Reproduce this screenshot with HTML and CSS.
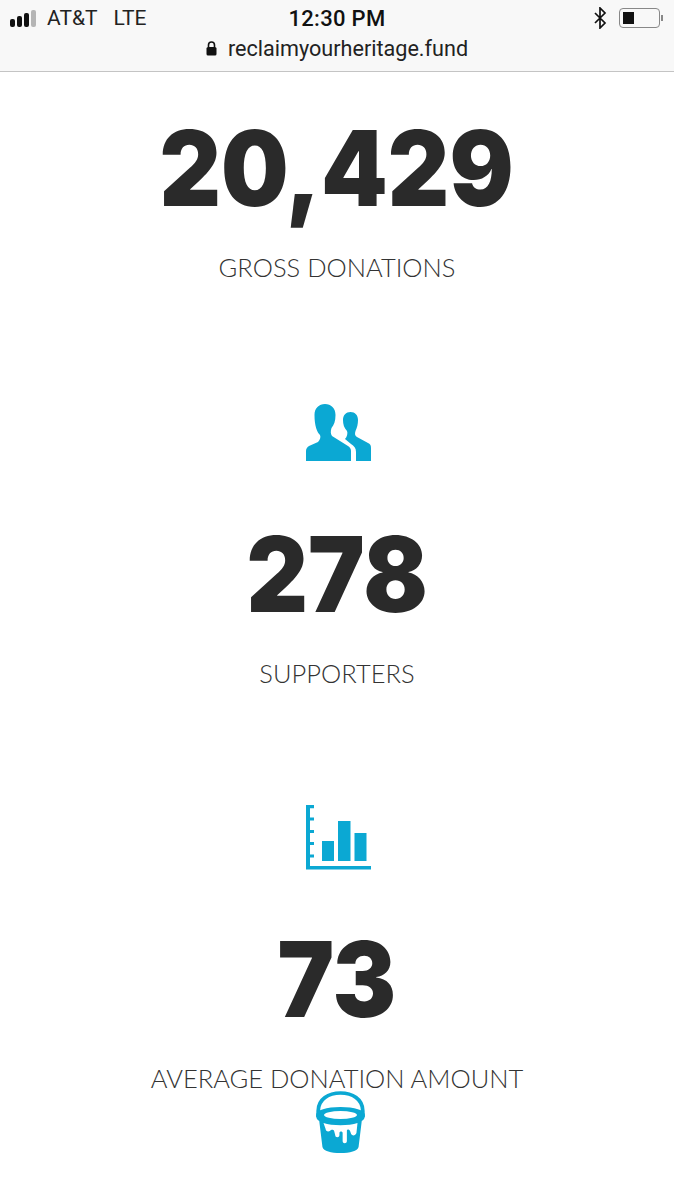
FILE: index.html
```html
<!DOCTYPE html>
<html lang="en">
<head>
    <meta charset="UTF-8">
    <meta name="viewport" content="width=device-width, initial-scale=1.0">
    <title>reclaimyourheritage.fund</title>
    <link rel="stylesheet" href="styles.css">
</head>
<body>

<header class="phone-bar">
    <div class="status-row">
        <div class="status-left">
            <span class="signal"><i></i><i></i><i></i><i class="off"></i></span>
            <span>AT&amp;T</span>
            <span class="network">LTE</span>
        </div>
        <div class="clock">12:30 PM</div>
        <div class="status-right">
            <svg class="bluetooth" width="14" height="22" viewBox="0 0 14 22">
                <path d="M2 6l10 10-5 5V1l5 5L2 16" fill="none" stroke="#111" stroke-width="1.7"/>
            </svg>
            <span class="battery"><span class="charge"></span></span>
            <span class="battery-tip"></span>
        </div>
    </div>
    <div class="url-row">
        <svg width="11" height="15" viewBox="0 0 11 15">
            <path d="M2.5 6V4a3 3 0 0 1 6 0v2" fill="none" stroke="#111" stroke-width="1.6"/>
            <rect x="0.5" y="6" width="10" height="8.5" rx="1.5" fill="#111"/>
        </svg>
        <span>reclaimyourheritage.fund</span>
    </div>
</header>

<main>
    <section class="stat stat-first">
        <div class="number">20,429</div>
        <div class="label">GROSS DONATIONS</div>
    </section>

    <section class="stat stat-people">
        <svg class="icon" width="66" height="58" viewBox="0 0 66 58">
            <path fill="#0ba8d3" d="M8.500 11C8.500 4 13 0 19 0s10.500 4 10.500 11c0 6-1.500 10-4 13-1 3-1 6 .5 8l16 10c2 1 3 3 3 5v10H0V47c0-2 1-4 3-5l9-4c2-2 3-5 2-7-3-3-5.500-9-5.500-20z"/>
            <path fill="#0ba8d3" d="M37 16c0-5 3-8 7.500-8S52 11 52 16c0 4-1 8-2.500 11-1 3-.5 5 1.500 6l11 6c2 1 3 2 3 5v13H50v-9c0-4-2-6-5-8l-6-5c2-2 3-6 2-8-3-3-4-7-4-11z"/>
        </svg>
        <div class="number number-people">278</div>
        <div class="label">SUPPORTERS</div>
    </section>

    <section class="stat stat-average">
        <svg class="icon" width="66" height="65" viewBox="0 0 66 65">
            <path fill="#0ba8d3" d="M0 0h8v3.300H4V12.500h4v3H4V25h4v3H4v9h4v3H4v9.500h4v3H4V61h61v3.500H0z"/>
            <rect x="16" y="36" width="12" height="20" fill="#0ba8d3"/>
            <rect x="32" y="16" width="12.500" height="40" fill="#0ba8d3"/>
            <rect x="48.500" y="28" width="12" height="28" fill="#0ba8d3"/>
        </svg>
        <div class="number number-average">73</div>
        <div class="label">AVERAGE DONATION AMOUNT</div>
    </section>

    <svg class="icon bucket" width="51" height="62" viewBox="0 0 48 62" preserveAspectRatio="none">
        <path d="M3 26V20C3 8 13 2 24 2s21 6 21 18v6" fill="none" stroke="#0ba8d3" stroke-width="3.500"/>
        <path fill="#0ba8d3" d="M1 24c0-5 10-8 23-8s23 3 23 8c0 3-1 5-3 6l-3 26c-1 4-8 6-17 6S8 60 7 56L4 30c-2-1-3-3-3-6z"/>
        <ellipse cx="24" cy="24" rx="15.500" ry="4" fill="#fff"/>
        <path fill="#fff" d="M8 32c8 3 24 3 32 0l-1 10c-1 3-4 3-5 1l-1-3c-1-2-3-2-3 0v10c0 3-4 3-4 0v-8c0-2-3-2-3 0v2c0 3-4 3-4 0l-1-4c-1-2-3-1-4 0-2 1-4 0-4-2z"/>
    </svg>
</main>

</body>
</html>
```

FILE: styles.css
```css
body {
    margin: 0;
    padding: 0;
    background-color: #fff;
    color: #2a2a2a;
    font-family: Roboto, "Liberation Sans", sans-serif;
}

.phone-bar {
    height: 72px;
    box-sizing: border-box;
    background-color: #f8f8f8;
    border-bottom: 1px solid #c4c4c4;
    color: #111;
}

.status-row {
    display: grid;
    grid-template-columns: 1fr auto 1fr;
    align-items: center;
    height: 36px;
    padding: 0 10px;
}

.status-left {
    display: flex;
    align-items: center;
    font-size: 21px;
    color: #222;
}

.network {
    margin-left: 16px;
}

.signal {
    display: flex;
    align-items: flex-end;
    gap: 2px;
    margin-right: 11px;
}

.signal i {
    display: block;
    width: 5px;
    height: 8px;
    border-radius: 2px;
    background-color: #111;
}

.signal i:nth-child(2) {
    height: 11px;
}

.signal i:nth-child(3) {
    height: 14px;
}

.signal i.off {
    height: 17px;
    background-color: #b5b5b5;
}

.clock {
    font-size: 22px;
    font-weight: 500;
    letter-spacing: 0.3px;
}

.status-right {
    display: flex;
    align-items: center;
    justify-content: flex-end;
    padding-right: 1px;
}

.bluetooth {
    margin-right: 12px;
}

.battery {
    display: block;
    box-sizing: border-box;
    width: 41px;
    height: 20px;
    padding: 3px;
    border: 1.5px solid #888;
    border-radius: 4px;
}

.charge {
    display: block;
    width: 11px;
    height: 100%;
    background-color: #111;
}

.battery-tip {
    width: 2px;
    height: 6px;
    margin-left: 1px;
    background-color: #888;
}

.url-row {
    display: flex;
    align-items: center;
    justify-content: center;
    gap: 11px;
    font-size: 21.6px;
    color: #222;
}

main {
    display: flex;
    flex-direction: column;
    align-items: center;
}

.stat {
    display: flex;
    flex-direction: column;
    align-items: center;
}

.stat-first {
    padding-top: 31px;
}

.stat-people {
    padding-top: 121px;
}

.stat-average {
    padding-top: 116px;
}

.icon {
    display: block;
    margin-left: 4px;
}

.number {
    font-family: Inter, sans-serif;
    font-weight: 900;
    font-size: 104px;
    line-height: 130px;
    color: #2a2a2a;
    transform: scaleX(0.915);
}

.number-people {
    margin-top: 47px;
}

.number-average {
    margin-top: 44px;
}

.label {
    margin-top: 18px;
    font-family: Lato, sans-serif;
    font-weight: 300;
    font-size: 25.5px;
    line-height: 32px;
    color: #333;
}

.bucket {
    margin-top: -3px;
    margin-left: 6px;
}
```
